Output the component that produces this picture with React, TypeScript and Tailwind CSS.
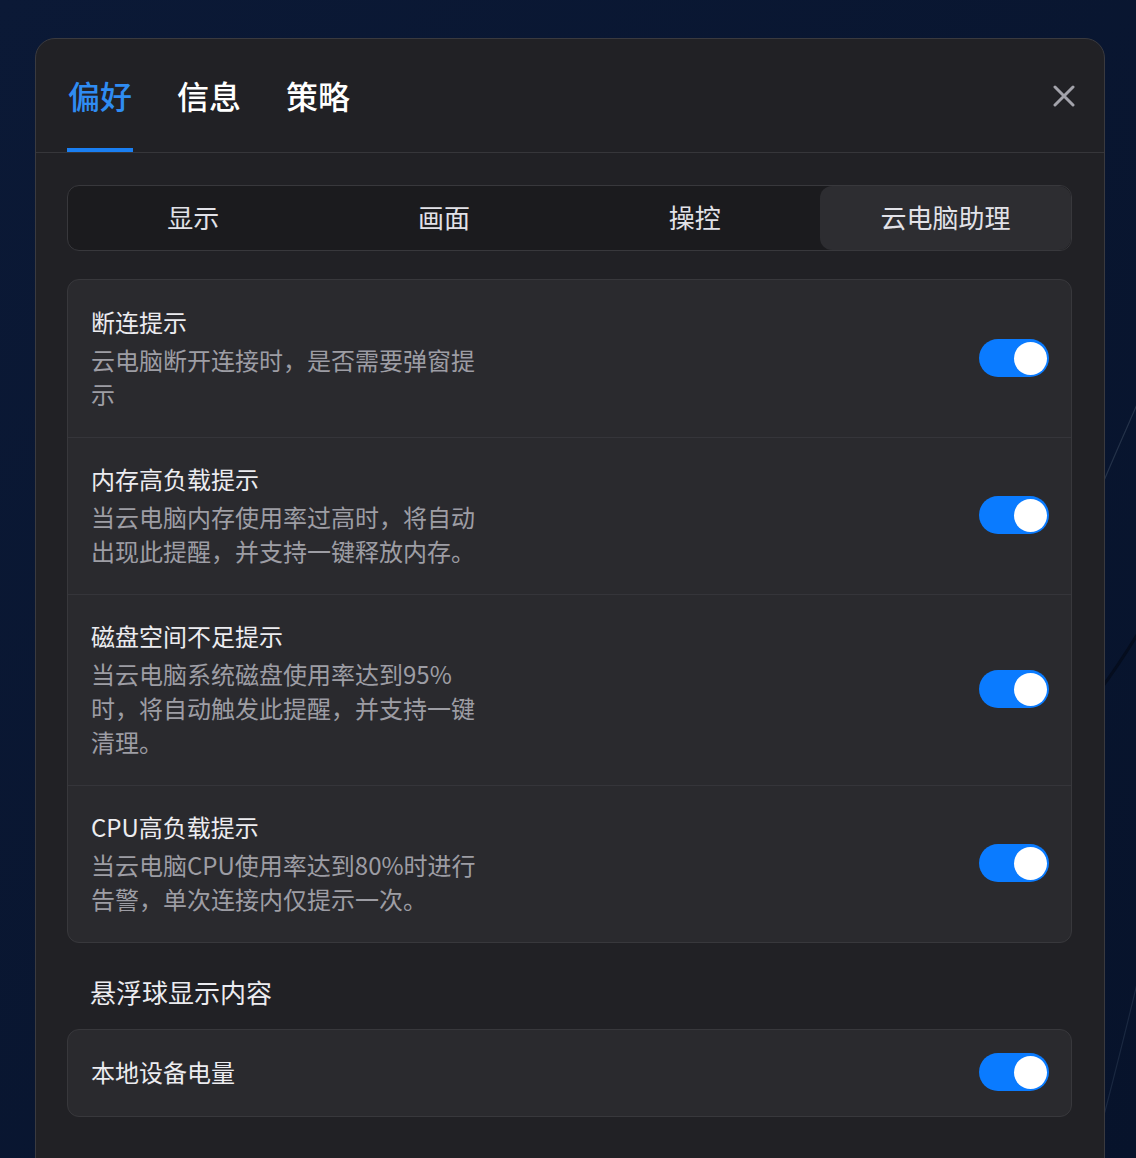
import React from "react";

const FONT = { fontFamily: '"Noto Sans CJK SC", "Noto Sans", sans-serif' };

function Toggle() {
  return (
    <div className="relative h-[38px] w-[70px] shrink-0 rounded-full bg-[#0a7bff]">
      <div className="absolute right-[2px] top-[2.5px] h-[33px] w-[33px] rounded-full bg-white" />
    </div>
  );
}

type Row = { title: string; desc: string };

const rows: Row[] = [
  { title: "断连提示", desc: "云电脑断开连接时，是否需要弹窗提示" },
  { title: "内存高负载提示", desc: "当云电脑内存使用率过高时，将自动出现此提醒，并支持一键释放内存。" },
  { title: "磁盘空间不足提示", desc: "当云电脑系统磁盘使用率达到95%时，将自动触发此提醒，并支持一键清理。" },
  { title: "CPU高负载提示", desc: "当云电脑CPU使用率达到80%时进行告警，单次连接内仅提示一次。" },
];

export default function App() {
  return (
    <div
      className="relative h-[1158px] w-[1136px] overflow-hidden bg-[#0a1731]"
      style={FONT}
    >
      <svg
        className="absolute inset-0"
        width="1136"
        height="1158"
        viewBox="0 0 1136 1158"
        fill="none"
      >
        <defs>
          <linearGradient id="bg" x1="0" y1="0" x2="1" y2="1">
            <stop offset="0" stopColor="#0b1936" />
            <stop offset="1" stopColor="#07132b" />
          </linearGradient>
        </defs>
        <rect width="1136" height="1158" fill="url(#bg)" />
        <path d="M1180 300 C 1150 380, 1120 440, 1096 500" stroke="#243249" strokeWidth="1.2" />
        <path d="M1200 520 C 1160 600, 1130 650, 1100 690" stroke="#050d1e" strokeWidth="3" />
        <path d="M1190 780 C 1160 880, 1130 1020, 1100 1130" stroke="#1a2840" strokeWidth="1.2" />
      </svg>

      <div className="relative ml-[35px] mt-[38px] w-[1070px] rounded-t-[20px] border border-[#3a3a3f] bg-[#212125] pb-[80px]">
        {/* header */}
        <div className="flex h-[114px] items-end justify-between border-b border-[#36363a] pl-[31px] pr-[29px]">
          <div className="flex items-end gap-[43px]">
            {[
              { t: "偏好", active: true },
              { t: "信息", active: false },
              { t: "策略", active: false },
            ].map((tab) => (
              <div key={tab.t} className="flex w-[66px] flex-col items-center">
                <span
                  className={
                    tab.active
                      ? "text-[32px] font-medium leading-[40px] text-[#2f8cf2]"
                      : "text-[32px] font-medium leading-[40px] text-white"
                  }
                >
                  {tab.t}
                </span>
                <div
                  className={
                    tab.active
                      ? "mt-[33px] h-[4px] w-full bg-[#1a7ff2]"
                      : "mt-[33px] h-[4px] w-full bg-transparent"
                  }
                />
              </div>
            ))}
          </div>
          <div className="flex self-center">
            <svg width="22" height="22" viewBox="0 0 22 22">
              <path
                d="M2 2 L20 20 M20 2 L2 20"
                stroke="#a3a3ab"
                strokeWidth="3"
                strokeLinecap="round"
              />
            </svg>
          </div>
        </div>

        <div className="px-[31px] pr-[32px]">
          {/* segmented */}
          <div className="mt-[32px] flex h-[66px] rounded-[12px] border border-[#38383c] bg-[#1b1b1e]">
            {["显示", "画面", "操控", "云电脑助理"].map((s, i) => (
              <div
                key={s}
                className={
                  i === 3
                    ? "flex flex-1 items-center justify-center rounded-[12px] bg-[#2d2d31] pb-[3px] text-[26px] text-[#e2e2e8]"
                    : "flex flex-1 items-center justify-center pb-[3px] text-[26px] text-[#e2e2e8]"
                }
              >
                {s}
              </div>
            ))}
          </div>

          {/* card 1 */}
          <div className="mt-[28px] overflow-hidden rounded-[12px] border border-[#38383c] bg-[#2a2a2e]">
            {rows.map((r, i) => (
              <div
                key={r.title}
                className={
                  i === 0
                    ? "flex items-center justify-between pb-[26px] pl-[23px] pr-[22px] pt-[25px]"
                    : "flex items-center justify-between border-t border-[#35353a] pb-[26px] pl-[23px] pr-[22px] pt-[24px]"
                }
              >
                <div className="w-[396px]">
                  <div className="text-[24px] leading-[34px] text-[#ececf0]">{r.title}</div>
                  <div className="mt-[4px] text-[24px] leading-[34px] text-[#9d9da4]">{r.desc}</div>
                </div>
                <Toggle />
              </div>
            ))}
          </div>

          {/* section title */}
          <div className="mt-[32px] pl-[23px] text-[26px] leading-[34px] text-[#ececf0]">
            悬浮球显示内容
          </div>

          {/* card 2 */}
          <div className="mt-[20px] flex h-[88px] items-center justify-between rounded-[12px] border border-[#38383c] bg-[#2a2a2e] pb-[2px] pl-[23px] pr-[22px]">
            <span className="text-[24px] text-[#ececf0]">本地设备电量</span>
            <Toggle />
          </div>
        </div>
      </div>
    </div>
  );
}
